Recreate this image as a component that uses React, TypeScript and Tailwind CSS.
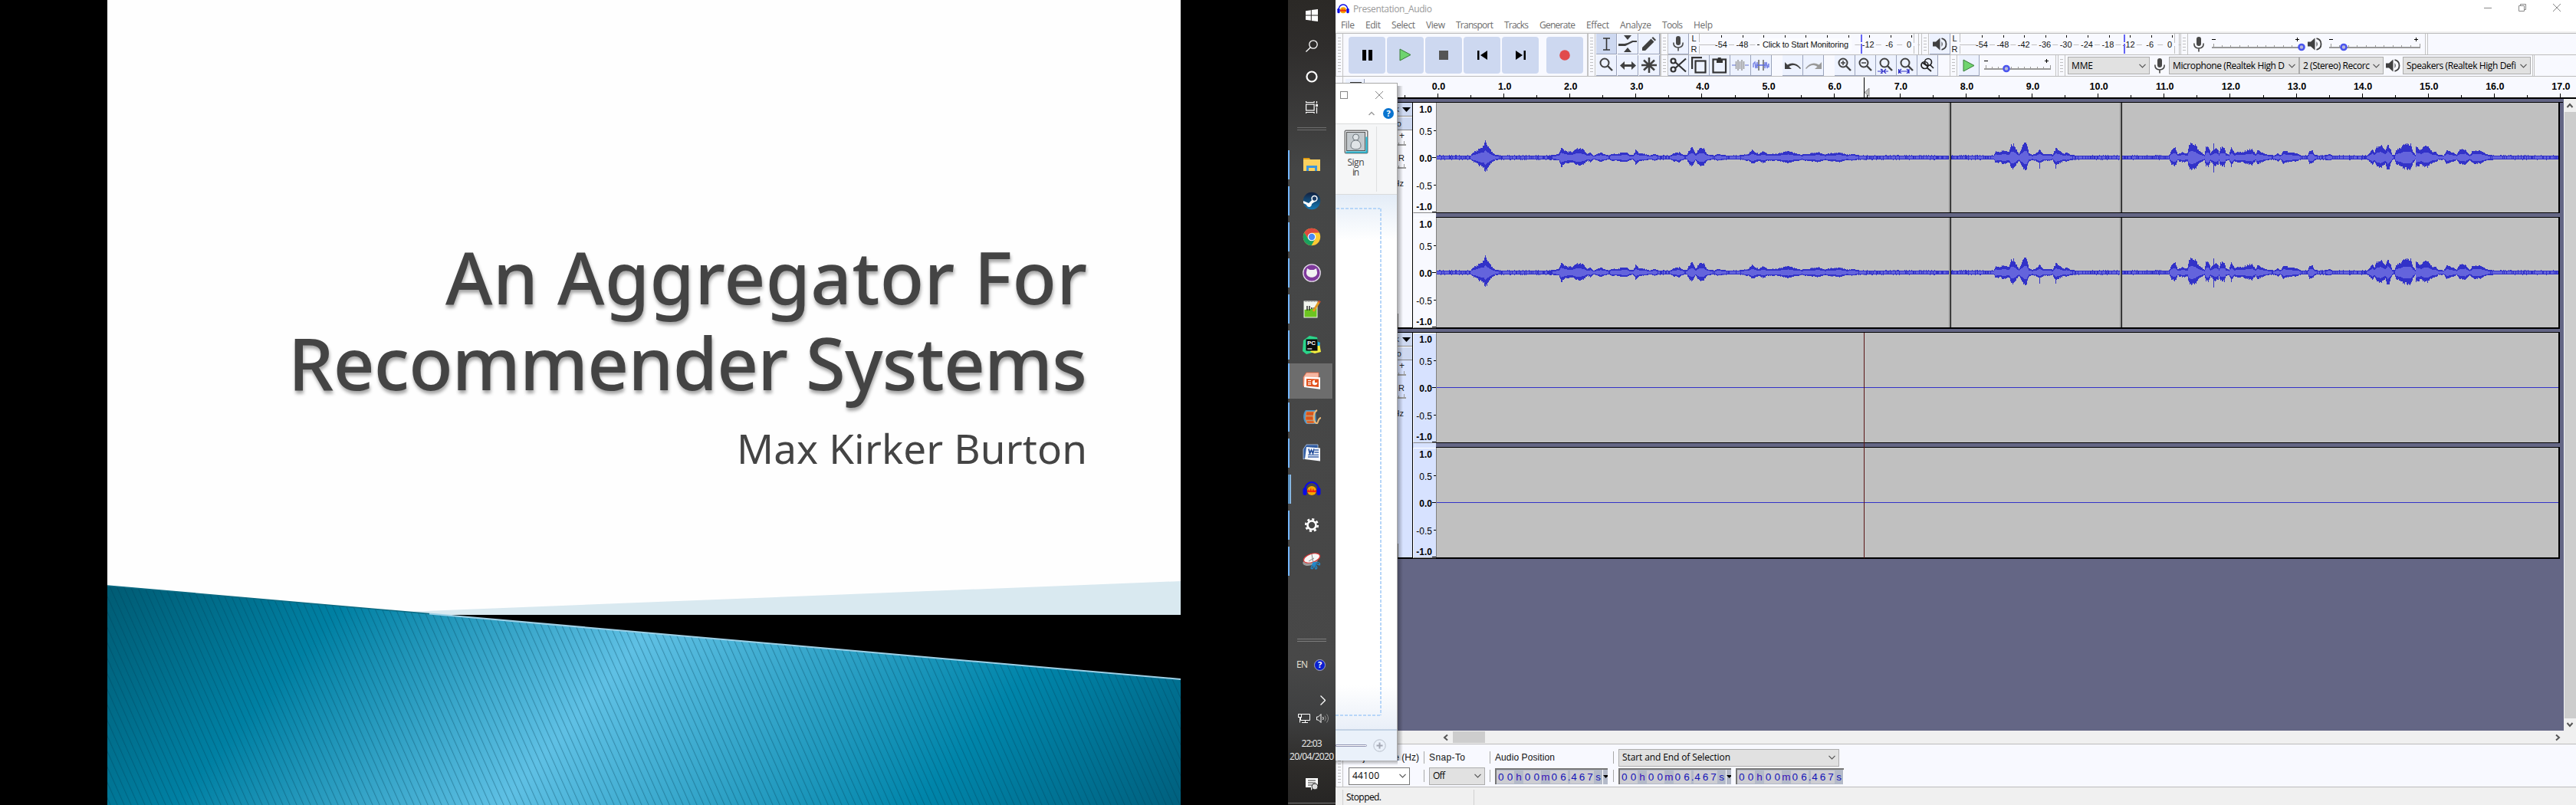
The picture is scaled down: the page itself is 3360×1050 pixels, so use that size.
import { useLayoutEffect, useRef, useState, type ReactNode } from "react";

/* Text spread over a known width by adjusting its letter spacing. */
function Fit({ w, children, className = "" }: { w: number; children: string; className?: string }) {
  const ref = useRef<HTMLSpanElement>(null);
  const [ls, setLs] = useState(0);
  useLayoutEffect(() => {
    const el = ref.current;
    if (!el) return;
    const natural = el.getBoundingClientRect().width - ls * children.length;
    setLs((w - natural) / Math.max(1, children.length - 1));
  }, [w, children]);
  return (
    <span className={`block shrink-0 whitespace-nowrap ${className}`} style={{ width: w }}>
      <span ref={ref} style={{ letterSpacing: ls }}>{children}</span>
    </span>
  );
}

/* ---------- Slide ---------- */

function Slide() {
  return (
    <section className="relative h-[1050px] w-[1680px] shrink-0 overflow-hidden bg-black">
      <div className="mx-[140px] h-[802px] bg-[#fefefe]" />
      <svg className="absolute inset-0" width="1680" height="1050">
        <defs>
          <linearGradient id="teal" gradientUnits="userSpaceOnUse" x1="140" y1="764" x2="1094" y2="1575">
            <stop offset="0" stopColor="#005b73" />
            <stop offset="0.2" stopColor="#0080a3" />
            <stop offset="0.46" stopColor="#5fc0e4" />
            <stop offset="0.79" stopColor="#0085aa" />
            <stop offset="1" stopColor="#00607e" />
          </linearGradient>
          <pattern id="hatch" width="9" height="10" patternUnits="userSpaceOnUse" patternTransform="skewX(24)">
            <rect width="1.2" height="10" fill="#003b55" opacity="0.35" />
          </pattern>
        </defs>
        <polygon points="530,798 1540,758 1540,802 530,802" fill="#d9e9f0" />
        <polygon points="140,764 1540,886 1540,1050 140,1050" fill="url(#teal)" />
        <polygon points="140,764 1540,886 1540,1050 140,1050" fill="url(#hatch)" />
        <line x1="140" y1="764" x2="560" y2="800.6" stroke="#0b6a82" strokeWidth="1.5" />
        <line x1="560" y1="800.6" x2="1540" y2="886" stroke="#9ed0e6" strokeWidth="2" />
      </svg>
      <div className="absolute top-[305px] right-[262px] flex flex-col items-end font-['Noto_Sans'] text-[#444]">
        <Fit w={837} className="h-[112px] text-[94px] leading-[112px] font-medium [text-shadow:1px_4px_4px_rgba(0,0,0,0.35)]">An Aggregator For</Fit>
        <Fit w={1042} className="h-[112px] text-[94px] leading-[112px] font-medium [text-shadow:1px_4px_4px_rgba(0,0,0,0.35)]">Recommender Systems</Fit>
        <Fit w={457} className="mt-[18px] h-[76px] text-[53px] leading-[76px]">Max Kirker Burton</Fit>
      </div>
    </section>
  );
}

/* ---------- Windows taskbar ---------- */

const AudacityLogo = ({ s }: { s: number }) => (
  <svg width={s} height={s} viewBox="0 0 24 24">
    <circle cx="12" cy="14" r="6" fill="#f5a800" />
    <path d="M6 14l2-2 1 3 2-5 1 5 2-4 1 3 3-1v3H6z" fill="#f02810" />
    <path d="M3 15C2 -1 22 -1 21 15" fill="none" stroke="#0a0ae6" strokeWidth="2" />
    <rect x="0.5" y="10" width="5" height="10" rx="2.5" fill="#0a0ae6" />
    <rect x="18.5" y="10" width="5" height="10" rx="2.5" fill="#0a0ae6" />
  </svg>
);

const apps: { name: string; icon: ReactNode }[] = [
  {
    name: "explorer",
    icon: (
      <svg width="24" height="24" viewBox="0 0 24 24">
        <path d="M1 3h8l1 2H1z" fill="#e09b12" />
        <path d="M1 5h22v15H1z" fill="#fbd15f" />
        <path d="M5 13h14v7h-3v-4H8v4H5z" fill="#3a95dd" />
      </svg>
    ),
  },
  {
    name: "steam",
    icon: (
      <svg width="24" height="24" viewBox="0 0 24 24">
        <defs>
          <linearGradient id="st" x1="0" y1="0" x2="0" y2="1">
            <stop offset="0" stopColor="#11203f" />
            <stop offset="1" stopColor="#1579b5" />
          </linearGradient>
        </defs>
        <circle cx="12" cy="12" r="11.2" fill="url(#st)" />
        <path d="M1 12l7 3 5-5 3 3-4 3c0 5-6 5-7 1l-4-2z" fill="#fff" />
        <circle cx="15.5" cy="9" r="3.4" fill="#1b3a63" stroke="#fff" strokeWidth="1.5" />
      </svg>
    ),
  },
  {
    name: "chrome",
    icon: (
      <svg width="24" height="24" viewBox="0 0 24 24">
        <circle cx="12" cy="12" r="11.2" fill="#fcc934" />
        <path d="M2.3 6.4A11.2 11.2 0 0 1 21.8 6.6L12 6.8 7.3 14.6z" fill="#de4a3e" />
        <path d="M2.3 6.4A11.2 11.2 0 0 0 11.5 23.2l5-8.6-4.5 2.2-4.7-2.2z" fill="#1aa15f" />
        <circle cx="12" cy="12" r="5.3" fill="#fff" />
        <circle cx="12" cy="12" r="4.2" fill="#4a8af4" />
      </svg>
    ),
  },
  {
    name: "github",
    icon: (
      <svg width="24" height="24" viewBox="0 0 24 24">
        <circle cx="12" cy="12" r="11.2" fill="#7f3a9c" stroke="#e6dcec" strokeWidth="1.3" />
        <path d="M6 6l3.500 2h5L18 6l1 5c1 9-15 9-14 0z" fill="#f2f2f2" />
      </svg>
    ),
  },
  {
    name: "notepad",
    icon: (
      <svg width="24" height="24" viewBox="0 0 24 24">
        <rect x="1.5" y="1.5" width="18" height="22" fill="#f3f6ee" />
        <path d="M2.5 13l16-2v11.5h-16z" fill="#6cc420" />
        <path d="M3 2.5h15" stroke="#888" strokeDasharray="1 1" />
        <path d="M6 8v6M9 8v6M11 11h2M14 11h2" stroke="#222" strokeWidth="1.4" />
        <path d="M22 2l-8 13" stroke="#e29a22" strokeWidth="3" />
        <path d="M22.5 1.5l-1 2" stroke="#c24a33" strokeWidth="3" />
      </svg>
    ),
  },
  {
    name: "pycharm",
    icon: (
      <svg width="24" height="24" viewBox="0 0 24 24">
        <path d="M1 6l8-6 10 2 2 9-5 10-11 3-5-4z" fill="#2bd58a" />
        <path d="M16 8l6 2 2 11-8 2-6-2z" fill="#f4ee3f" />
        <path d="M18 7l5 2-1 4h-4z" fill="#18b8e8" />
        <rect x="4.5" y="4.5" width="15" height="15" fill="#0a0a0a" />
        <path d="M6.3 17h6" stroke="#fff" strokeWidth="1.2" />
        <text x="6" y="12.4" fontSize="8" fontWeight="700" fill="#fff" fontFamily="Liberation Sans, sans-serif">PC</text>
      </svg>
    ),
  },
  {
    name: "powerpoint",
    icon: (
      <svg width="24" height="24" viewBox="0 0 24 24">
        <path d="M5 1h16v8L1 19V7z" fill="#f6b7a2" stroke="#e0603a" strokeWidth=".8" />
        <path d="M3 6.5l20 .8v15.4L2 20z" fill="#fff" />
        <path d="M5 9l16 .5v10.500L5 18.5z" fill="#e2521d" />
        <circle cx="16" cy="14" r="3.3" fill="#fff" />
        <path d="M16 14v-3.500h3.500V14z" fill="#e2521d" />
        <path d="M7 11.5h4M7 14h4M7 16.2h4" stroke="#fff" strokeWidth="1.2" />
      </svg>
    ),
  },
  {
    name: "moviemaker",
    icon: (
      <svg width="24" height="24" viewBox="0 0 24 24">
        <path d="M4 3h13l1 18H5C0 17 0 7 4 3z" fill="#4b93c9" />
        <path d="M5 5h10v5H4zM4 11h10v5H4zM5 17h10v3H6z" fill="#d9541a" stroke="#f0a05a" strokeWidth=".7" />
        <path d="M19 3c-6 3-5 15-1 17 3 1 1-6 6-7" fill="none" stroke="#eab877" strokeWidth="2" />
      </svg>
    ),
  },
  {
    name: "word",
    icon: (
      <svg width="24" height="24" viewBox="0 0 24 24">
        <path d="M5 1h15v8L1 20V7z" fill="#2f5aa0" stroke="#b9cdea" strokeWidth=".8" />
        <path d="M5 4l18 1.500v17L3 20z" fill="#f4f7fc" />
        <path d="M8 6.500l1.500 6 2-4.500 2 4.500 1.500-6" fill="none" stroke="#1f4a98" strokeWidth="1.7" />
        <path d="M15.500 8h5.500M15.500 11h5.500M7 14.300h14M7 17h14" stroke="#3c66ac" strokeWidth="1.3" />
      </svg>
    ),
  },
  { name: "audacity", icon: <AudacityLogo s={24} /> },
  {
    name: "settings",
    icon: (
      <svg width="20" height="20" viewBox="0 0 20 20">
        <circle cx="10" cy="10" r="5.5" fill="none" stroke="#fff" strokeWidth="2.600" />
        <circle cx="10" cy="10" r="7.800" fill="none" stroke="#fff" strokeWidth="2.600" strokeDasharray="3.06 3.06" />
      </svg>
    ),
  },
  {
    name: "snip",
    icon: (
      <svg width="24" height="24" viewBox="0 0 24 24">
        <ellipse cx="10" cy="12.500" rx="10" ry="5" fill="#9a9a9a" transform="rotate(-15 10 12.500)" />
        <ellipse cx="12" cy="8" rx="11" ry="5.500" fill="#f7f7f7" stroke="#dc3b3b" strokeWidth="1.200" transform="rotate(-18 12 8)" />
        <path d="M12 3l2 12M8 12l7-4" stroke="#888" />
        <path d="M14 14l-3 7c2 2 4 0 3-7l3 8c3 0 2-4-3-8l8 3c2-3-2-4-8-3z" fill="none" stroke="#1f8bd0" strokeWidth="1.300" />
      </svg>
    ),
  },
];

function Taskbar() {
  return (
    <aside className="flex h-[1050px] w-[62px] shrink-0 flex-col bg-[linear-gradient(#2b2926,#2f2d2c_60px,#454646_220px,#474747_760px,#484848_860px,#3f4041_930px,#2e2c2a_1000px,#262524)] text-white">
      <div className="flex h-10 items-center justify-center">
        <svg width="16" height="16"><path d="M0 2.300L6.800 1.300V7.500H0zM7.800 1.100L16 0V7.500H7.800zM0 8.500H6.800V14.700L0 13.700zM7.800 8.500H16V16L7.800 14.900z" fill="#fff" /></svg>
      </div>
      <div className="flex h-10 items-center justify-center">
        <svg width="16" height="16" fill="none" stroke="#fff" strokeWidth="1.300"><circle cx="10" cy="6" r="5.200" /><path d="M6.300 9.700L.5 15.500" /></svg>
      </div>
      <div className="flex h-10 items-center justify-center">
        <svg width="16" height="16"><circle cx="8" cy="8" r="6.500" fill="none" stroke="#fff" strokeWidth="2.200" /></svg>
      </div>
      <div className="flex h-10 items-center justify-center">
        <svg width="16" height="16" fill="none" stroke="#fff" strokeWidth="1.200"><rect x=".6" y="4" width="10.500" height="8" /><path d="M.6 0v1.500h10.500V0M.6 16v-1.500h10.500V16M14.500 0v3M14.500 8v8" /><path d="M14.500 4v3" strokeWidth="3" /></svg>
      </div>
      <div className="mx-auto mt-[6px] mb-[21px] h-1 w-[38px] border-y border-[#6d6d6d]" />
      {apps.map((a) => (
        <div key={a.name} className="flex h-[47px] items-center">
          <span className={a.name === "audacity" ? "h-[38px] w-1 border-r border-[#9ccaf3] bg-[#5f96c6]" : a.name === "powerpoint" ? "h-[46px] w-[2px] bg-[#76b9ff]" : "h-[38px] w-[2px] bg-[#76b9ff]"} />
          <span className={a.name === "powerpoint" ? "flex h-[46px] w-[57px] items-center justify-center border-r border-[#3c3c3c] bg-[#6d6d6d] pl-px" : a.name === "audacity" ? "flex w-[56px] items-center justify-center pr-[2px]" : "flex w-[58px] items-center justify-center"}>{a.icon}</span>
        </div>
      ))}
      <div className="mx-auto mt-[78px] h-1 w-[38px] border-y border-[#7d7d7d]" />
      <div className="mt-[18px] flex h-6 items-center pl-[11px] font-['Open_Sans'] text-[12px] text-[#e8e4d8]">
        <Fit w={15}>EN</Fit>
        <span className="ml-2 flex h-[15px] w-[15px] items-center justify-center rounded-full border border-[#a9a9b8] bg-[#0a1fd0] text-[11px] font-bold text-white">?</span>
      </div>
      <div className="mt-[24px] flex h-5 items-center pl-[42px]">
        <svg width="7" height="13" fill="none" stroke="#fff" strokeWidth="1.300"><path d="M.5 .5l6 6-6 6" /></svg>
      </div>
      <div className="mt-[2px] flex h-6 items-center gap-2 pl-[13px]">
        <svg width="16" height="14" fill="none" stroke="#fff" strokeWidth="1"><path d="M5 1.500h10.500v8H3.500V6M9.500 9.500v3M5 12.500h8" /><rect x=".5" y="1.500" width="4" height="4" /><path d="M2.500 5.500v7" /></svg>
        <svg width="17" height="14" fill="none" stroke="#fff" strokeWidth="1"><path d="M.5 5v4h2l3.500 3.500v-11L2.500 5zM8.500 5q1.500 2 0 4" /><path d="M11 3.500q3 3.500 0 7M13.500 1.500q4 5.500 0 11" stroke="#8b8b8b" /></svg>
      </div>
      <div className="mt-[12px] flex flex-col items-center font-['Open_Sans'] text-[12px] leading-[17px] text-[#f0f0f0]">
        <Fit w={27}>22:03</Fit>
        <Fit w={58}>20/04/2020</Fit>
      </div>
      <div className="mt-[20px] flex h-4 justify-center">
        <svg width="16" height="16"><path d="M0 0h16v12h-6l-3 4v-4H0z" fill="#fff" /><path d="M3 3h10M3 6h10M3 9h6" stroke="#333" /><circle cx="12" cy="11" r="4" fill="#ddd" stroke="#333" /></svg>
      </div>
      <div className="mt-4 h-px bg-[#757575]" />
    </aside>
  );
}

/* ---------- Audacity toolbars ---------- */

const Grabber = ({ h }: { h: string }) => (
  <div className={`flex w-[10px] shrink-0 items-center justify-center border-x border-[#c4c4c4] ${h}`}>
    <div className="h-[calc(100%-9px)] w-1 bg-[repeating-linear-gradient(#c0c0c0_0_1px,transparent_1px_4px)]" />
  </div>
);

const BigButton = ({ children, className = "" }: { children: ReactNode; className?: string }) => (
  <div className={`flex h-12 w-12 shrink-0 items-center justify-center rounded-[4px] bg-[#cdd8f0] ${className}`}>{children}</div>
);

const Tool = ({ children, className = "bg-[#edf2ff]" }: { children: ReactNode; className?: string }) => (
  <div className={`flex h-[27px] w-[27px] shrink-0 items-center justify-center border-r border-b border-[#9aa3bb] ${className}`}>{children}</div>
);

const Mic = () => (
  <svg width="14" height="20" viewBox="0 0 14 20" className="shrink-0">
    <rect x="4" y="0" width="6" height="12" rx="3" fill="#484848" />
    <path d="M.8 8.500q0 6.500 6.200 6.500t6.200-6.500M7 15v4.500" fill="none" stroke="#484848" strokeWidth="1.600" />
  </svg>
);

const Speaker = () => (
  <svg width="19" height="17" viewBox="0 0 19 17" className="shrink-0">
    <path d="M0 5.500h4L9.500.5v16L4 11.500H0z" fill="#404040" />
    <path d="M11.500 5q2.500 3.500 0 7z" fill="#404040" />
    <path d="M11.500 1.200q6 1.300 6 7.300t-6 7.300" fill="none" stroke="#404040" strokeWidth="1.800" />
  </svg>
);

const Lens = ({ extra }: { extra?: ReactNode }) => (
  <svg width="22" height="22" viewBox="0 0 22 22" fill="none" stroke="#404040" strokeWidth="2">
    <circle cx="9" cy="8" r="5.500" />
    <path d="M13 12l6 6" strokeWidth="2.400" />
    {extra}
  </svg>
);

const decibels = ["-54", "-48", "-42", "-36", "-30", "-24", "-18", "-12", "-6", "0"];

function Meter({ cover = false, mark }: { cover?: boolean; mark: number }) {
  return (
    <>
      <div className="flex h-[27px] w-[9px] shrink-0 flex-col items-center justify-between font-['Liberation_Sans'] text-[11px] leading-[13px] text-[#222]">
        <span>L</span>
        <span>R</span>
      </div>
      <svg width="288" height="27" className="ml-[2px] shrink-0">
        <path d="M.5 0v11M.5 16v10M280.500 0v12M280.500 16v10M286.500 0v27M0 14.500h22" stroke="#c0c0c0" fill="none" />
        {decibels.map((d, i) => {
          const hidden = cover && i > 1 && i < 7;
          return (
            <g key={d}>
              <path d={`M${Math.round(29 + i * 27.6)}.5 2v3`} stroke="#000" />
              <path d={`M${39 + i * 27.4} 14.500h7`} stroke="#c0c0c0" />
              {!hidden && (
                <text x={i === 9 ? 274 : 29 + i * 27.4} y="17.500" textAnchor="middle" fontSize="11" fill="#111" fontFamily="Liberation Sans, sans-serif">{d}</text>
              )}
            </g>
          );
        })}
        <path d={`M${mark} 1v10M${mark} 13v13`} stroke="#6464f5" strokeWidth="2" />
        {cover && (
          <g>
            <path d="M76 14.500h3" stroke="#111" />
            <rect x="79" y="6" width="120" height="16" fill="#fbfcff" />
            <text x="83" y="18" fontSize="11" textLength="112" fill="#111" fontFamily="Liberation Sans, sans-serif">Click to Start Monitoring</text>
          </g>
        )}
      </svg>
    </>
  );
}

function Slider({ w, at }: { w: number; at: number }) {
  const ticks = Array.from({ length: 11 }, (_, i) => 1.5 + (i * (w - 3)) / 10);
  return (
    <svg width={w + 6} height="27" className="shrink-0 overflow-visible">
      <path d={`M0 7.500h5M${w - 8} 7.500h5M${w - 5.5} 5v5`} stroke="#000" />
      <path d={ticks.map((t, i) => `M${Math.round(t)}.5 ${i % 10 ? 15 : 13}v4`).join("")} stroke="#999" />
      <rect y="17" width={w} height="2" fill="#999" />
      <circle cx={at} cy="17.500" r="3.500" fill="#b9b9d8" stroke="#4a55ee" strokeWidth="2.600" />
    </svg>
  );
}

const Chevron = () => (
  <svg width="9" height="6" fill="none" stroke="#555" strokeWidth="1.200" className="shrink-0"><path d="M.5 .8l4 4 4-4" /></svg>
);

function Combo({ w, tw, text, className = "border-[#adadad] bg-[#e1e1e1]" }: { w: number; tw: number; text: string; className?: string }) {
  return (
    <div className={`flex h-[23px] shrink-0 items-center justify-between overflow-hidden border px-1 font-['Open_Sans'] text-[12px] text-black ${className}`} style={{ width: w }}>
      <Fit w={tw}>{text}</Fit>
      <Chevron />
    </div>
  );
}

const Clip = ({ blue }: { blue?: boolean }) => (
  <svg width="22" height="16" fill="none" strokeWidth="1.500">
    {blue ? (
      <>
        <path d="M1 11V6l2-2 1 8 2-8v8M16 4v8l2-8 1 8 2-6v5" stroke="#7c88e6" />
        <path d="M8 1v14M14 1v14" stroke="#888" strokeWidth="2" />
        <path d="M6 8h10" stroke="#5b68dc" />
      </>
    ) : (
      <>
        <path d="M0 8h5M17 8h5" stroke="#8f9be0" />
        <path d="M5.500 3v10M8 1v14M10.500 3v10M13 1v14M15.500 3v10" stroke="#999" />
      </>
    )}
  </svg>
);

function Toolbars() {
  return (
    <div className="flex h-[57px] shrink-0 border-y border-[#bcbcbc] bg-[#f8f9ff]">
      <Grabber h="h-full" />
      <div className="flex w-[319px] shrink-0 items-center gap-[2px] border-r border-[#c4c4c4] pl-[7px]">
        <BigButton><svg width="13" height="14"><path d="M0 0h5v14H0zM8 0h5v14H8z" /></svg></BigButton>
        <BigButton><svg width="16" height="17"><path d="M1 1l14 7.500L1 16z" fill="#6fd46f" stroke="#3b7c3b" /></svg></BigButton>
        <BigButton><svg width="12" height="12"><path d="M0 0h12v12H0z" fill="#555" /></svg></BigButton>
        <BigButton><svg width="13" height="12"><path d="M0 0h2.500v12H0zM13 0v12L4 6z" /></svg></BigButton>
        <BigButton><svg width="13" height="12"><path d="M13 0h-2.500v12H13zM0 0v12l9-6z" /></svg></BigButton>
        <BigButton className="ml-2"><svg width="14" height="14"><circle cx="7" cy="7" r="6.800" fill="#e14b4b" /></svg></BigButton>
      </div>
      <Grabber h="h-full" />
      <div className="grid w-[85px] shrink-0 grid-cols-3 content-start gap-px border-r border-[#c4c4c4] pl-px">
        <Tool className="bg-[#cdd8f0]"><svg width="9" height="17" fill="none" stroke="#333" strokeWidth="1.600"><path d="M0 1h9M0 16h9M4.500 1v15" /></svg></Tool>
        <Tool><svg width="24" height="22" fill="#404040"><path d="M7 0h10l-5 6zM7 22h10l-5-6zM0 11h8l4-1 6-3h6v2h-5l-6 3-4 2H0z" /></svg></Tool>
        <Tool><svg width="18" height="18" fill="#404040"><path d="M0 18v-4L11.500 2.500l4 4L4 18zM12.500 1.500L14 0l4 4-1.500 1.500z" /></svg></Tool>
        <Tool><Lens /></Tool>
        <Tool><svg width="21" height="13" fill="#404040"><path d="M0 6.500L6 1v4h9V1l6 5.500L15 12V8H6v4z" /></svg></Tool>
        <Tool><svg width="20" height="20" stroke="#404040" strokeWidth="2.500"><path d="M10 0v20M0 10h20M3 3.500l14 13M17 3.500l-14 13" /></svg></Tool>
      </div>
      <div className="flex flex-1 flex-col">
        <div className="flex h-[28px] w-full items-center border-b border-[#bcbcbc]">
          <Grabber h="h-[27px]" />
          <Tool><Mic /></Tool>
          <div className="w-[2px]" />
          <Meter cover mark={212} />
          <div className="w-[2px]" />
          <Grabber h="h-[27px]" />
          <div className="w-px" />
          <Tool><Speaker /></Tool>
          <div className="w-px" />
          <Meter mark={215} />
          <Grabber h="h-[27px]" />
          <div className="flex w-[310px] items-center border-r border-[#c4c4c4] pl-[7px]">
            <Mic />
            <div className="w-[10px]" />
            <Slider w={117} at={117} />
            <div className="w-[3px]" />
            <Speaker />
            <div className="w-[9px]" />
            <Slider w={119} at={19} />
          </div>
          <div className="h-full w-[3px] border-r border-[#c4c4c4]" />
        </div>
        <div className="flex h-[27px] w-full items-center">
          <Grabber h="h-[27px]" />
          <Tool><svg width="22" height="20" fill="none" stroke="#333" strokeWidth="2.200"><circle cx="4.500" cy="4.500" r="3" /><circle cx="4.500" cy="15.500" r="3" /><path d="M7 6l14 12.500M7 14L21 1.500" /></svg></Tool>
          <Tool><svg width="20" height="22" fill="none" stroke="#333" strokeWidth="2.200"><path d="M1.100 16V1.100H14" /><rect x="5.500" y="5.500" width="13" height="15" /></svg></Tool>
          <Tool><svg width="20" height="22" fill="none" stroke="#333" strokeWidth="2.200"><rect x="1.500" y="3.500" width="16.500" height="17" /><path d="M6 6h8M9.700 1v4" strokeWidth="4" /></svg></Tool>
          <Tool><Clip /></Tool>
          <Tool><Clip blue /></Tool>
          <div className="w-[14px]" />
          <Tool><svg width="21" height="11"><path d="M0 1v9h9L5.500 7q7-5 14.500 3l1-1Q13-1 3.500 4.500z" fill="#404040" /></svg></Tool>
          <Tool><svg width="21" height="11"><path d="M21 1v9h-9l3.500-3q-7-5-14.500 3l-1-1Q8-1 17.500 4.500z" fill="#999" /></svg></Tool>
          <div className="w-[14px]" />
          <Tool><Lens extra={<path d="M6 8h6M9 5v6" strokeWidth="1.500" />} /></Tool>
          <Tool><Lens extra={<path d="M6 8h6" strokeWidth="1.500" />} /></Tool>
          <Tool><Lens extra={<path d="M0 19h14M6 16v6M4 16l3 3-3 3M11 16l-3 3 3 3" stroke="#3232c8" strokeWidth="1.200" />} /></Tool>
          <Tool><Lens extra={<path d="M0 19h14M.6 16v6M14 16v6M4 16l-3 3 3 3M11 16l3 3-3 3" stroke="#3232c8" strokeWidth="1.200" />} /></Tool>
          <Tool><svg width="20" height="20" fill="none" stroke="#222" strokeWidth="1.700"><circle cx="11" cy="6" r="4.500" /><circle cx="6.500" cy="10" r="4.500" /><path d="M9 13l6 5M13 9l5 5M4 7l7 5" /></svg></Tool>
          <div className="w-[15px]" />
          <Grabber h="h-[27px]" />
          <div className="w-[2px]" />
          <Tool><svg width="16" height="17"><path d="M1 1l14 7.500L1 16z" fill="#6fd46f" stroke="#3b7c3b" /></svg></Tool>
          <div className="w-[6px]" />
          <Slider w={87} at={29} />
          <div className="h-full w-px bg-[#c4c4c4]" />
          <div className="w-[2px]" />
          <Grabber h="h-[27px]" />
          <div className="w-[3px]" />
          <Combo w={107} tw={28} text="MME" />
          <div className="w-[6px]" />
          <Mic />
          <div className="w-[5px]" />
          <Combo w={170} tw={146} text="Microphone (Realtek High D" />
          <Combo w={110} tw={87} text="2 (Stereo) Recorc" />
          <div className="w-[3px]" />
          <Speaker />
          <div className="w-[3px]" />
          <Combo w={167} tw={143} text="Speakers (Realtek High Defi" />
          <div className="ml-[2px] h-full w-[3px] border-x border-[#c4c4c4]" />
        </div>
      </div>
    </div>
  );
}

/* ---------- Timeline and tracks ---------- */

function Timeline() {
  return (
    <div className="relative flex h-[29px] shrink-0 overflow-hidden border-b-2 border-black bg-[#f8f9ff]">
      <div className="h-full w-[10px] shrink-0 border-r border-[#c4c4c4]" />
      <div className="mt-[3px] ml-[3px] h-[24px] w-[25px] shrink-0 border-r border-[#9aa3bb] bg-[#edf2ff] pt-1 pl-[6px]">
        <div className="h-3 w-[15px] border-2 border-[#333] bg-[#7dbd7d]" />
      </div>
      <div className="ml-[53.500px] flex shrink-0 pt-[6px]">
        {Array.from({ length: 18 }, (_, i) => (
          <div key={i} className="w-[86.12px] shrink-0 text-center font-['Liberation_Sans'] text-[12.5px] leading-[15px] font-bold text-black">
            {i}.0
          </div>
        ))}
      </div>
      <svg className="absolute top-0 left-0" width="1618" height="27">
        {Array.from({ length: 36 }, (_, k) => {
          const x = Math.round(133 + (k - 1) * 43.06) + 0.5;
          return <path key={k} d={`M${x} ${k % 2 ? 22 : 24}V27`} stroke="#000" />;
        })}
        <path d="M689.500 1v26" stroke="#000" />
        <path d="M696 15v11l-6-5.500z" fill="#c0c0c0" stroke="#777" strokeWidth=".8" />
      </svg>
    </div>
  );
}

const envelope: [number, number][] = [
  [1873, 2], [1918, 2], [1920, 5], [1927, 9], [1930, 12], [1935, 14], [1937, 20], [1940, 14], [1945, 7], [1950, 3], [1956, 2],
  [2020, 2], [2028, 3], [2033, 4], [2036, 13], [2040, 9], [2045, 7], [2050, 7], [2055, 10], [2060, 11], [2065, 9], [2070, 4], [2074, 6],
  [2078, 2], [2083, 4], [2087, 6], [2092, 4], [2098, 2], [2102, 4], [2110, 4], [2116, 6], [2122, 6], [2125, 3], [2130, 3], [2133, 9],
  [2138, 5], [2145, 4], [2152, 2], [2158, 4], [2163, 2], [2178, 2], [2183, 5], [2190, 6], [2196, 2], [2200, 3], [2203, 9], [2207, 12],
  [2211, 4], [2214, 8], [2218, 12], [2222, 11], [2226, 4], [2235, 2], [2241, 4], [2250, 2], [2268, 2], [2272, 3], [2280, 4], [2285, 9],
  [2290, 6], [2294, 4], [2299, 7], [2306, 4], [2316, 4], [2325, 6], [2332, 8], [2340, 5], [2350, 3], [2362, 5], [2372, 6], [2380, 3],
  [2388, 5], [2400, 6], [2408, 3], [2416, 4], [2426, 2], [2600, 2], [2603, 8], [2608, 6], [2612, 9], [2620, 7], [2623, 15], [2626, 16], [2629, 11],
  [2633, 4], [2637, 12], [2640, 18], [2643, 17], [2646, 5], [2650, 3], [2655, 4], [2660, 9], [2665, 4], [2673, 4], [2677, 3], [2681, 11], [2688, 7],
  [2692, 4], [2695, 6], [2700, 3], [2706, 2], [2829, 2], [2832, 9], [2837, 12], [2840, 4], [2846, 6], [2853, 5], [2855, 16], [2859, 18],
  [2863, 15], [2868, 8], [2875, 3], [2877, 12], [2880, 13], [2883, 5], [2886, 9], [2889, 11], [2893, 9], [2894, 5], [2896, 12], [2901, 12], [2903, 5], [2907, 3], [2910, 12],
  [2914, 5], [2920, 7], [2925, 6], [2931, 9], [2937, 10], [2942, 4], [2944, 9], [2950, 6], [2958, 3], [2966, 2], [2971, 5], [2974, 2],
  [2978, 9], [2985, 6], [2994, 5], [3002, 2], [3010, 2], [3012, 8], [3016, 8], [3019, 3], [3024, 2], [3031, 2], [3038, 4], [3043, 2], [3087, 2],
  [3094, 10], [3097, 6], [3099, 12], [3105, 15], [3111, 8], [3114, 17], [3118, 9], [3120, 3], [3123, 2], [3125, 9], [3131, 11], [3135, 16],
  [3144, 16], [3147, 7], [3150, 3], [3151, 13], [3158, 9], [3162, 14], [3168, 12], [3173, 6], [3176, 7], [3180, 3], [3187, 2], [3191, 9],
  [3198, 6], [3204, 3], [3208, 9], [3215, 10], [3221, 3], [3225, 8], [3236, 8], [3241, 5], [3245, 3], [3251, 2], [3340, 2],
];

function buildWave(): { peak: string; rms: string } {
  let peak = "";
  let rms = "";
  let seg = 0;
  let seed = 7;
  const rnd = () => {
    seed = (seed * 16807) % 2147483647;
    return seed / 2147483647;
  };
  for (let x = 1874; x < 3337; x++) {
    while (envelope[seg + 1][0] <= x) seg++;
    const [x0, a0] = envelope[seg];
    const [x1, a1] = envelope[seg + 1];
    const a = a0 + ((a1 - a0) * (x - x0)) / (x1 - x0);
    const quiet = a < 2.6;
    let up = Math.round(a * (0.92 + rnd() * 0.22) + (quiet ? rnd() * 0.5 : 0));
    let down = Math.round(a * (0.76 + rnd() * 0.24) + (quiet ? rnd() * 0.8 : 0));
    if (x === 2887) { up = 18; down = 19; }
    if (x === 1939) down = 17;
    if (x === 2660 || x === 2681) down = 14;
    if (x > 3112 && x < 3117) down = 15;
    const inner = quiet ? (rnd() > 0.35 ? 1 : 0) : Math.max(1, Math.round(a * 0.45));
    const px = x - 1874 + 0.5;
    peak += `M${px} ${71 - up}V${72 + down}`;
    if (inner) rms += `M${px} ${71 - Math.min(inner, up - 1)}V${72 + Math.min(inner, Math.max(down - 1, 1))}`;
  }
  return { peak, rms };
}
const wave = buildWave();

function Channel({ filled, last }: { filled: boolean; last: boolean }) {
  const bg = filled ? "bg-[#f8f9ff]" : "bg-[#d7e2ff]";
  return (
    <div className="flex h-[150px]">
      <div className={`flex h-full w-[30px] shrink-0 flex-col ${bg}`}>
        <div className="flex h-[144px] items-start border-t border-l border-b border-white border-b-[#888] font-['Liberation_Sans'] text-[12px] leading-3 text-black">
          <div className="flex h-[143px] w-[24px] flex-col items-end">
            <b className="mt-[2px]">1.0</b>
            <span className="mt-[17px]">0.5</span>
            <b className="mt-[23px]">0.0</b>
            <span className="mt-[24px]">-0.5</span>
            <b className="mt-[15px]">-1.0</b>
          </div>
          <svg width="5" height="143" stroke="#000"><path d="M2 35.500h3M0 70.500h5M2 106.500h3M0 141.500h5" /></svg>
        </div>
        {last && <div className="h-[6px] bg-[#646685]"><div className="h-px bg-black" /><div className="mt-1 h-px bg-black" /></div>}
      </div>
      <div className="h-full w-[1466px] shrink-0 bg-[#646685]">
        <div className="h-[143px] border-r-2 border-l border-r-black border-l-[#808080] bg-[#c0c0c0]">
          <svg width="1463" height="143" shapeRendering="crispEdges">
            {filled ? (
              <>
                <path d={wave.peak} stroke="#3232c8" />
                <path d={wave.rms} stroke="#6464dc" />
                <path d="M669.500 0v143M892.500 0v143" stroke="#8a8a8a" strokeWidth="3" />
                <path d="M670.500 0v143M893.500 0v143" stroke="#000" />
              </>
            ) : (
              <path d="M0 71.500H1463" stroke="#3232c8" />
            )}
          </svg>
        </div>
        <div className={last ? "h-[2px] bg-black" : "h-px bg-black"} />
        <div className={last ? "h-1" : "h-[5px]"} />
        <div className="h-px bg-black" />
      </div>
    </div>
  );
}

function Track({ filled }: { filled: boolean }) {
  return (
    <div className="flex h-[300px]">
      <div className="flex w-[101px] shrink-0 flex-col bg-[#646685]">
        <div className={`flex h-[293px] flex-col items-end border-r border-black font-['Liberation_Sans'] text-[11px] leading-[15px] text-[#222] ${filled ? "bg-[#f8f9ff]" : "bg-[#d7e2ff]"}`}>
          <div className="flex h-[18px] w-full items-center justify-end gap-1 border-b border-[#888] bg-[#cdd8f0] pr-[2px]">
            Audio Track
            <svg width="11" height="6"><path d="M0 0h11L5.500 6z" /></svg>
          </div>
          <div className="flex h-[18px] w-full items-center justify-end border-t border-b border-white border-b-[#888] bg-[#cdd8f0] pr-[14px]">Solo</div>
          <span className="pr-[10px] text-[12px] leading-[14px]">+</span>
          <svg width="60" height="6" className="mr-2"><path d="M0 5h60" stroke="#999" strokeWidth="2" /><path d="M50.500 2v3M57.500 0v5" stroke="#999" /></svg>
          <span className="mt-[9px] pr-[10px]">R</span>
          <svg width="60" height="6" className="mr-2"><path d="M0 5h60" stroke="#999" strokeWidth="2" /><path d="M50.500 2v3M57.500 0v5" stroke="#999" /></svg>
          <span className="mt-[12px] pr-[11px]">Stereo, 44100Hz</span>
          <div className="mt-auto mr-[18px] h-[18px] w-[60px] border-r border-[#888]" />
        </div>
        <div className="h-[2px] bg-black" />
        <div className="mt-1 h-px bg-black" />
      </div>
      <div className="flex flex-col">
        <Channel filled={filled} last={false} />
        <Channel filled={filled} last />
      </div>
    </div>
  );
}

const Arrow = ({ d }: { d: string }) => (
  <svg width="10" height="10" fill="none" stroke="#555" strokeWidth="2" className="shrink-0"><path d={d} /></svg>
);

function TrackArea() {
  return (
    <div className="relative flex h-[824px] shrink-0 bg-[#646685]">
      <div className="flex w-[1601px] shrink-0 flex-col">
        <div className="h-[5px] border-b border-black" />
        <Track filled />
        <Track filled={false} />
        <div className="-mt-px h-px bg-[#646685]" />
      </div>
      <div className="ml-auto flex w-[16px] flex-col items-center justify-between bg-[#f0f0f0] pt-1 pb-[3px]">
        <Arrow d="M1.500 7L5 3l3.500 4" />
        <div className="my-[3px] w-[15px] flex-1 bg-[#cdcdcd]" />
        <Arrow d="M1.500 3L5 7l3.500-4" />
      </div>
      <div className="absolute top-[305px] left-[689px] h-[294px] w-px bg-[#5a1616]" />
    </div>
  );
}

/* ---------- Selection bar and status bar ---------- */

function TimeBox({ w }: { w: number }) {
  return (
    <div className="flex h-[21px] shrink-0 items-center overflow-hidden border-t-2 border-l-2 border-[#777] bg-[#b4bac9] font-['Liberation_Sans'] text-[13.5px] leading-[17px] text-[#1212b8]" style={{ width: w }}>
      {["0", "0", "h", "0", "0", "m", "0", "6"].map((c, i) => (
        <span key={i} className={c === "h" || c === "m" ? "w-[11.6px] shrink-0 text-center text-[#3a10b8]" : "w-[11.6px] shrink-0 bg-[#cdcdd2] text-center"}>{c}</span>
      ))}
      <span className="w-[3px] shrink-0 text-center">.</span>
      {["4", "6", "7", "s"].map((c) => (
        <span key={c} className={c === "s" ? "w-[10.500px] shrink-0 text-center" : "w-[10.500px] shrink-0 bg-[#cdcdd2] text-center"}>{c}</span>
      ))}
      <span className="flex h-full w-[9px] shrink-0 items-center justify-center border-l border-white"><svg width="7" height="4"><path d="M0 0h7L3.500 4z" /></svg></span>
    </div>
  );
}

const Sep = () => <div className="h-4 w-px shrink-0 bg-[#a8a8a8]" />;

function SelectionBar() {
  return (
    <div className="flex h-[57px] shrink-0 border-y border-[#bcbcbc] bg-[#f8f9ff]">
      <Grabber h="h-full" />
      <div className="flex flex-col pl-[7px] font-['Liberation_Sans'] text-[12px] text-[#111]">
        <div className="mt-[5px] flex h-[24px] items-center">
          <Fit w={92}>Project Rate (Hz)</Fit>
          <div className="w-[6px]" /><Sep /><div className="w-[6px]" />
          <Fit w={47}>Snap-To</Fit>
          <div className="w-[32px]" /><Sep /><div className="w-[6px]" />
          <Fit w={78}>Audio Position</Fit>
          <div className="w-[76px]" /><Sep /><div className="w-[6px]" />
          <Combo w={288} tw={141} text="Start and End of Selection" />
        </div>
        <div className="flex h-[24px] items-center">
          <Combo w={80} tw={35} text="44100" className="border-[#777] bg-white" />
          <div className="w-[18px]" /><Sep /><div className="w-[6px]" />
          <Combo w={73} tw={16} text="Off" />
          <div className="w-[6px]" /><Sep /><div className="w-[6px]" />
          <TimeBox w={147} />
          <div className="w-[7px]" /><Sep /><div className="w-[6px]" />
          <TimeBox w={147} />
          <div className="w-[6px]" />
          <TimeBox w={141} />
        </div>
      </div>
    </div>
  );
}

const menus: [string, number][] = [
  ["File", 18], ["Edit", 20], ["Select", 31], ["View", 25], ["Transport", 49], ["Tracks", 32], ["Generate", 47], ["Effect", 30], ["Analyze", 41], ["Tools", 27], ["Help", 25],
];

function Audacity() {
  return (
    <main className="flex h-[1050px] w-[1618px] shrink-0 flex-col overflow-hidden bg-white">
      <header className="flex h-[24px] shrink-0 items-center pl-[2px] font-['Open_Sans'] text-[12px] text-[#999]">
        <AudacityLogo s={16} />
        <Fit w={103} className="ml-[5px]">Presentation_Audio</Fit>
        <div className="mr-[20px] mb-1 ml-auto flex items-center gap-[35px]">
          <svg width="10" height="10" stroke="#888"><path d="M0 5.500h10" /></svg>
          <svg width="10" height="10" fill="none" stroke="#888"><path d="M.5 2.500h7v7h-7zM2.500 2.500v-2h7v7h-2" /></svg>
          <svg width="10" height="10" stroke="#888"><path d="M0 0l10 10M10 0L0 10" /></svg>
        </div>
      </header>
      <nav className="flex h-[17px] shrink-0 items-center gap-[14px] pt-px pl-[7px] font-['Open_Sans'] text-[12px] leading-[16px] text-[#6d6d6d]">
        {menus.map(([m, w]) => (
          <Fit key={m} w={w}>{m}</Fit>
        ))}
      </nav>
      <div className="h-[2px] shrink-0 bg-[#f0f0f0]" />
      <Toolbars />
      <Timeline />
      <TrackArea />
      <div className="flex h-[17px] shrink-0 items-center bg-[#f0f0f0] pl-[139px]">
        <Arrow d="M7 1.500L3 5l4 3.500" />
        <div className="ml-1 h-[15px] w-[42px] bg-[#cdcdcd]" />
        <div className="mr-[19px] ml-auto"><Arrow d="M3 1.500L7 5 3 8.500" /></div>
      </div>
      <SelectionBar />
      <footer className="flex min-h-0 flex-1 items-center bg-[#f0f0f0] pt-[2px] font-['Open_Sans'] text-[12px] text-black">
        <div className="h-[20px] w-[10px] shrink-0 border-r border-[#d0d0d0]" />
        <Fit w={46} className="ml-1">Stopped.</Fit>
        <div className="h-[20px] w-[121px] shrink-0 border-r border-[#d0d0d0]" />
      </footer>
    </main>
  );
}

/* ---------- Window lying over the editor ---------- */

function OverlayWindow() {
  return (
    <div className="absolute top-[108px] left-[1742px] h-[884px] w-[81px] overflow-hidden">
      <div className="flex h-full w-full flex-col border-t border-r border-[#a8a8a8] bg-white">
        <div className="flex h-[26px] items-end justify-between pr-[18px] pb-[6px] pl-[6px]">
          <div className="h-[10px] w-[10px] border border-[#888]" />
          <svg width="10" height="10" stroke="#888"><path d="M0 0l10 10M10 0L0 10" /></svg>
        </div>
        <div className="flex h-[27px] items-center justify-end gap-[11px] border-b border-[#dadbdc] pr-1">
          <svg width="8" height="6" fill="none" stroke="#999" strokeWidth="1.400"><path d="M.5 5L4 1.500 7.500 5" /></svg>
          <span className="flex h-[14px] w-[14px] items-center justify-center rounded-full bg-[#0a74cf] font-['Open_Sans'] text-[11px] font-bold text-white">?</span>
        </div>
        <div className="flex h-[92px] shrink-0 border-b border-[#dadbdc] bg-[#f5f6f7]">
          <div className="my-[3px] flex w-[54px] flex-col items-center border-r border-[#dfe0e1] pt-1 font-['Open_Sans'] text-[12px] leading-[13px] text-[#444]">
            <svg width="32" height="32">
              <rect x=".5" y=".5" width="31" height="31" rx="2" fill="#777" />
              <rect x="2" y="2" width="28" height="28" fill="#e8eaec" />
              <path d="M2.500 29.500h27v-20" fill="none" stroke="#1fb4cf" strokeWidth="2" />
              <rect x="3.500" y="3.500" width="24" height="24" fill="#c3c9cd" stroke="#555" />
              <circle cx="15.500" cy="10" r="4" fill="#dfe4e7" stroke="#6b747a" />
              <path d="M9 22c0-6 3-8 6.500-8s6.500 2 6.500 8c-1 5-12 5-13 0z" fill="#dfe4e7" stroke="#6b747a" />
            </svg>
            <Fit w={22} className="mt-1">Sign</Fit>
            <Fit w={9}>in</Fit>
          </div>
        </div>
        <div className="flex h-[697px] shrink-0 flex-col bg-[linear-gradient(#e3ecf7,#fff_60px,#fff_640px,#e9eff8)] pt-[17px] pr-[20px] pb-[17px]">
          <svg width="60" height="663" fill="none" stroke="#b7d6f8" strokeWidth="2" strokeDasharray="4 2"><path d="M1 1h57M59 1v661M58 662H0" /></svg>
        </div>
        <div className="flex flex-1 items-center justify-between border-t-2 border-[#c3d2e4] bg-[#eaf1fa] pr-[14px]">
          <div className="h-[3px] w-[41px] rounded-r border border-[#9194b3] bg-white" />
          <svg width="17" height="17" fill="none" stroke="#b6bdc8"><circle cx="8.500" cy="8.500" r="7.700" /><path d="M8.500 4.500v8M4.500 8.500h8" stroke="#a3a8b3" strokeWidth="2" /></svg>
        </div>
      </div>
    </div>
  );
}

export default function App() {
  return (
    <div className="relative flex h-[1050px] w-[3360px] overflow-hidden bg-black">
      <Slide />
      <Taskbar />
      <Audacity />
      <div className="absolute top-[112px] left-[1822px] h-[880px] w-[8px] bg-[linear-gradient(to_right,rgba(0,0,0,0.35),transparent)]" />
      <div className="absolute top-[992px] left-[1742px] h-[6px] w-[81px] bg-[linear-gradient(rgba(0,0,0,0.3),transparent)]" />
      <OverlayWindow />
    </div>
  );
}
